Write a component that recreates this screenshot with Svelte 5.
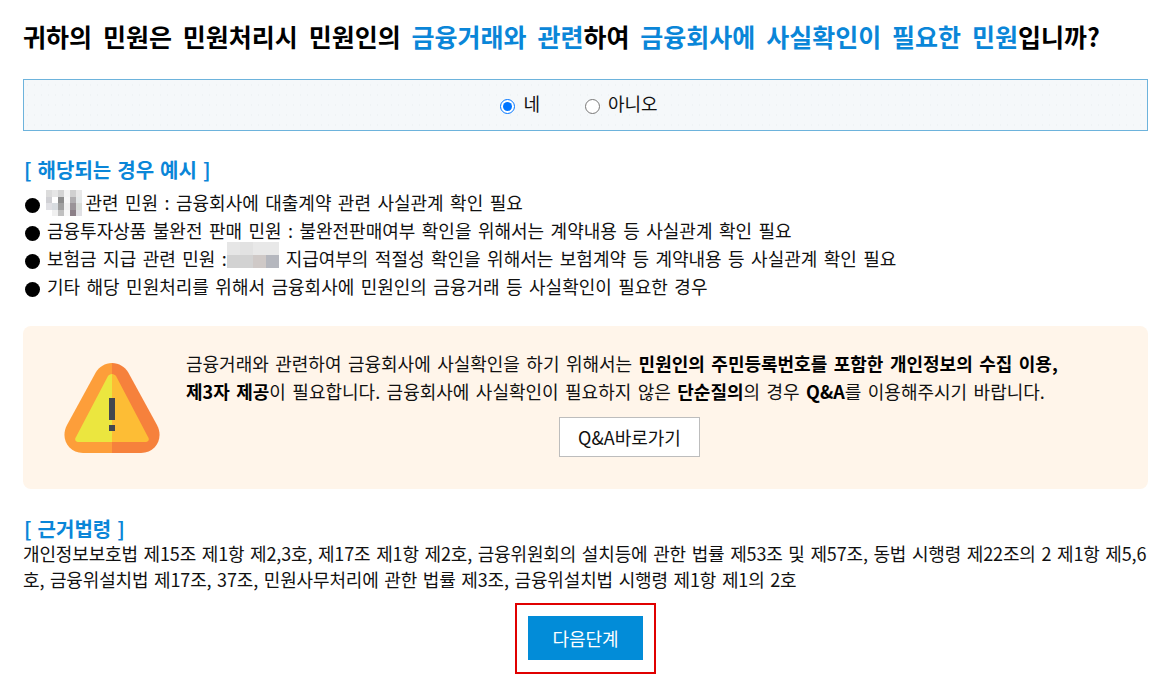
<script lang="ts">
  let agree = $state('yes')
  const mosaicA = [
    '#dcdcdc','#e6e6e6','#d4d4d4','#f4f4f4','#d0d0d0','#e8e8e8',
    '#d0d0d4','#ffffff','#8c8c8c','#f8f8f8','#b0aeb0','#e4e8e8',
    '#e0e0e4','#d8dce0','#a0a0a0','#f0f0f0','#9a9498','#d8dcd8',
    '#ffffff','#f0f0f0','#c0c0c0','#f8f8f8','#8c8088','#e0e0e4'
  ]
  const mosaicB = ['#e6e6e6','#e2e2e2','#e8e8e8','#e8e8e8','#d2d2d2','#d2d2d2','#cfc9c7','#b5b7be']
</script>

<main class="page">
  <h1 class="question">
    귀하의 민원은 민원처리시 민원인의 <em>금융거래와 관련</em>하여 <em>금융회사에 사실확인이 필요한 민원</em>입니까?
  </h1>

  <div class="choice" role="radiogroup">
    <label><input type="radio" name="agree" value="yes" bind:group={agree} /> 네</label>
    <label><input type="radio" name="agree" value="no" bind:group={agree} /> 아니오</label>
  </div>

  <h2 class="sub first">[ 해당되는 경우 예시 ]</h2>
  <ul class="cases">
    <li>
      <span class="mosaic a">{#each mosaicA as c}<i style="background:{c}"></i>{/each}</span>
      관련 민원 : 금융회사에 대출계약 관련 사실관계 확인 필요
    </li>
    <li>금융투자상품 불완전 판매 민원 : 불완전판매여부 확인을 위해서는 계약내용 등 사실관계 확인 필요</li>
    <li>
      보험금 지급 관련 민원 :
      <span class="mosaic b">{#each mosaicB as c}<i style="background:{c}"></i>{/each}</span>
      지급여부의 적절성 확인을 위해서는 보험계약 등 계약내용 등 사실관계 확인 필요
    </li>
    <li>기타 해당 민원처리를 위해서 금융회사에 민원인의 금융거래 등 사실확인이 필요한 경우</li>
  </ul>

  <section class="notice">
    <svg class="warn" viewBox="0 0 96 90" width="96" height="90" aria-hidden="true">
      <path d="M48 0C41 0 35 4 32 9L3 62C-4 75 4 90 19 90H48Z" fill="#fd9e3a" />
      <path d="M48 0C55 0 61 4 64 9L93 62C100 75 92 90 77 90H48Z" fill="#f6813c" />
      <path d="M48 11C46 11 45 12 44 13L12 74C10 77 12 79 15 79H48Z" fill="#ebe63f" />
      <path d="M48 11C50 11 51 12 52 13L84 74C86 77 84 79 81 79H48Z" fill="#fdbd35" />
      <rect x="45" y="35" width="6" height="22" fill="#44464f" />
      <rect x="45" y="62" width="6" height="6" fill="#44464f" />
    </svg>
    <div class="notice-body">
      <p>
        금융거래와 관련하여 금융회사에 사실확인을 하기 위해서는 <b>민원인의 주민등록번호를 포함한 개인정보의 수집 이용,</b><br />
        <b>제3자 제공</b>이 필요합니다. 금융회사에 사실확인이 필요하지 않은 <b>단순질의</b>의 경우 <b>Q&amp;A</b>를 이용해주시기 바랍니다.
      </p>
      <div class="qa"><button>Q&amp;A바로가기</button></div>
    </div>
  </section>

  <h2 class="sub law-title">[ 근거법령 ]</h2>
  <p class="law">
    개인정보보호법 제15조 제1항 제2,3호, 제17조 제1항 제2호, 금융위원회의 설치등에 관한 법률 제53조 및 제57조, 동법 시행령 제22조의 2 제1항 제5,6<br />호, 금융위설치법 제17조, 37조, 민원사무처리에 관한 법률 제3조, 금융위설치법 시행령 제1항 제1의 2호
  </p>

  <div class="next-wrap">
    <div class="next-outline"><button class="next">다음단계</button></div>
  </div>
</main>

<style>
  :global(body) {
    margin: 0;
    background: #fff;
  }
  .page {
    padding: 0 19px 0 23px;
    font-family: "Noto Sans CJK KR", "Noto Sans", sans-serif;
    color: #111;
    font-size: 18px;
    word-spacing: 2.4px;
  }
  .question {
    margin: 0;
    padding-top: 18px;
    font-size: 25px;
    line-height: 36px;
    font-weight: 700;
    color: #000;
    white-space: nowrap;
    word-spacing: 5.2px;
  }
  .question em {
    font-style: normal;
    color: #0a86d8;
  }
  .choice {
    margin-top: 25px;
    height: 50px;
    display: flex;
    align-items: center;
    justify-content: center;
    gap: 45px;
    background-color: #f5f8fa;
    background-image: radial-gradient(circle, #eff3f5 0.6px, transparent 0.8px);
    background-size: 7px 10px;
    border: 1px solid #6db3dc;
    padding-right: 13px;
  }
  .choice label {
    display: flex;
    align-items: center;
    gap: 8px;
    line-height: 24px;
    margin-top: -4px;
  }
  .choice input {
    margin: 6px 0 0;
    width: 15px;
    height: 15px;
  }
  .sub {
    margin: 0;
    font-size: 20px;
    line-height: 26px;
    font-weight: 700;
    color: #0a86d8;
    word-spacing: 1.5px;
  }
  .first {
    margin-top: 26px;
    padding-left: 1px;
  }
  .cases {
    margin: 5px 0 0;
    padding: 0;
    list-style: none;
  }
  .cases li {
    height: 28px;
    line-height: 28px;
    white-space: nowrap;
  }
  .cases li::before {
    content: "";
    display: inline-block;
    width: 15px;
    height: 15px;
    margin: 0 7px 0 2px;
    border-radius: 50%;
    background: #000;
    vertical-align: -3px;
  }
  .mosaic {
    display: inline-grid;
    vertical-align: top;
  }
  .mosaic i {
    display: block;
  }
  .mosaic.a {
    grid-template-columns: repeat(6, 6px);
    grid-auto-rows: 6.5px;
    margin: 2px -3px 0 -1px;
  }
  .mosaic.b {
    grid-template-columns: repeat(4, 13px);
    grid-auto-rows: 13px;
    margin: -2px 0 0 -6px;
  }
  .notice {
    margin-top: 26px;
    height: 163px;
    display: flex;
    background: #fff5ea;
    border-radius: 8px;
  }
  .warn {
    margin: 37px 0 0 41px;
    flex: none;
  }
  .notice-body {
    width: 887px;
    margin-left: 26px;
    padding-top: 23px;
  }
  .notice-body p {
    margin: 0;
    line-height: 28px;
    white-space: nowrap;
  }
  .notice-body b {
    font-weight: 700;
    color: #000;
  }
  .qa {
    margin-top: 12px;
    display: flex;
    justify-content: center;
  }
  .qa button {
    width: 141px;
    height: 40px;
    background: #fff;
    border: 1px solid #bdbdbd;
    font: inherit;
    color: #111;
    padding: 0;
  }
  .law-title {
    margin-top: 28px;
    line-height: 23px;
    padding-left: 1px;
  }
  .law {
    margin: 0;
    line-height: 26px;
    word-spacing: 1.8px;
    letter-spacing: -0.15px;
  }
  .next-wrap {
    margin-top: 11px;
    display: flex;
    justify-content: center;
  }
  .next-outline {
    border: 2px solid #e00000;
    padding: 11px 11px 12px;
    width: 115px;
  }
  .next {
    display: block;
    width: 115px;
    height: 44px;
    border: none;
    background: #028cd8;
    color: #fff;
    font: inherit;
    padding: 0;
  }
</style>
